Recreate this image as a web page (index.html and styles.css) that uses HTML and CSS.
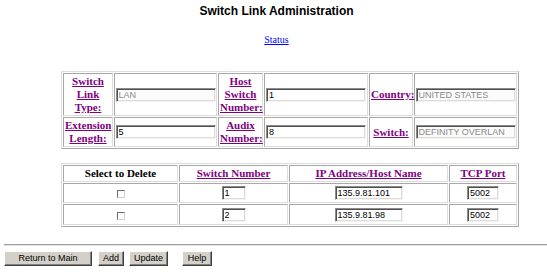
FILE: index.html
```html
<!DOCTYPE html>
<html lang="en">
<head>
    <meta charset="UTF-8">
    <title>Switch Link Administration</title>
    <link rel="stylesheet" href="styles.css">
</head>
<body>
<div class="page">
    <h1 class="title">Switch Link Administration</h1>
    <p class="status"><a href="#">Status</a></p>

    <table class="grid props">
        <tr>
            <td class="lbl c1"><a href="#">Switch Link Type:</a></td>
            <td class="fld c2"><input class="txt wide dim" type="text" value="LAN" readonly></td>
            <td class="lbl c3"><a href="#">Host Switch Number:</a></td>
            <td class="fld c4"><input class="txt wide" type="text" value="1"></td>
            <td class="lbl c5"><a href="#">Country:</a></td>
            <td class="fld c6"><input class="txt wide dim" type="text" value="UNITED STATES" readonly></td>
        </tr>
        <tr>
            <td class="lbl"><a href="#">Extension Length:</a></td>
            <td class="fld"><input class="txt wide" type="text" value="5"></td>
            <td class="lbl"><a href="#">Audix Number:</a></td>
            <td class="fld"><input class="txt wide" type="text" value="8"></td>
            <td class="lbl"><a href="#">Switch:</a></td>
            <td class="fld"><input class="txt wide dim" type="text" value="DEFINITY OVERLAN" readonly></td>
        </tr>
    </table>

    <table class="grid links">
        <tr class="head">
            <th class="k1">Select to Delete</th>
            <th class="k2"><a href="#">Switch Number</a></th>
            <th class="k3"><a href="#">IP Address/Host Name</a></th>
            <th class="k4"><a href="#">TCP Port</a></th>
        </tr>
        <tr>
            <td><input class="box" type="checkbox"></td>
            <td><input class="txt num" type="text" value="1"></td>
            <td><input class="txt ip" type="text" value="135.9.81.101"></td>
            <td><input class="txt port" type="text" value="5002"></td>
        </tr>
        <tr>
            <td><input class="box" type="checkbox"></td>
            <td><input class="txt num" type="text" value="2"></td>
            <td><input class="txt ip" type="text" value="135.9.81.98"></td>
            <td><input class="txt port" type="text" value="5002"></td>
        </tr>
    </table>

    <hr class="rule">

    <div class="actions">
        <button class="btn main">Return to Main</button>
        <button class="btn add">Add</button>
        <button class="btn update">Update</button>
        <button class="btn help">Help</button>
    </div>
</div>
</body>
</html>
```

FILE: styles.css
```css
body {
    margin: 0;
    font-family: "Liberation Serif", "Times New Roman", serif;
    background-color: #fff;
    color: #000;
    overflow: hidden;
}
.page {
    width: 545px;
    padding: 4px 0 0 4px;
}
.title {
    margin: 0;
    font: bold 12px/14px "Liberation Sans", Arial, sans-serif;
    text-align: center;
}
.status {
    margin: 16px 0 0;
    font-size: 10px;
    line-height: 12px;
    text-align: center;
}
.status a {
    color: #0000ff;
}

/* bordered tables, old browser look */
.grid {
    border-collapse: separate;
    border-spacing: 1px;
    border: 1px solid;
    border-color: #dcdcdc #a8a8a8 #a8a8a8 #dcdcdc;
    table-layout: fixed;
    width: 458px;
    margin-left: 57px;
}
.grid td,
.grid th {
    box-sizing: border-box;
    border: 1px solid;
    border-color: #a8a8a8 #dcdcdc #dcdcdc #a8a8a8;
    padding: 1px;
    text-align: center;
    vertical-align: middle;
    font-size: 11px;
    line-height: 13px;
    font-weight: bold;
}
.grid a {
    color: #800080;
}
.props {
    margin-top: 25px;
}
.props .fld {
    padding: 0;
}
.c1 { width: 50px; }
.c2 { width: 103px; }
.c3 { width: 45px; }
.c4 { width: 104px; }
.c5 { width: 44px; }
.c6 { width: 103px; }

.links {
    margin-top: 14px;
}
.links td {
    padding: 2px;
}
.k1 { width: 115px; }
.k2 { width: 109px; }
.k3 { width: 159px; }
.k4 { width: 68px; }

/* inset text boxes */
.txt {
    box-sizing: border-box;
    height: 14px;
    margin: 0;
    padding: 0 2px;
    border: 1px solid;
    border-color: #8c8c8c #f4f4f4 #f4f4f4 #8c8c8c;
    box-shadow: inset 1px 1px 0 #505050, inset -1px -1px 0 #dedad4;
    background-color: #fff;
    font: 9px/10px "Liberation Sans", Arial, sans-serif;
    color: #000;
    vertical-align: middle;
}
.dim {
    color: #8a8a8a;
    background-color: #fbfbfb;
}
.wide { width: 100px; }
.num { width: 24px; }
.ip { width: 68px; }
.port { width: 32px; }

.box {
    appearance: none;
    box-sizing: border-box;
    width: 8px;
    height: 8px;
    margin: 0;
    border: 1px solid;
    border-color: #6e6e6e #d0d0d0 #d0d0d0 #6e6e6e;
    background-color: #fff;
    vertical-align: middle;
}

.rule {
    margin: 17px 0 0;
    height: 0;
    border: none;
    border-top: 1px solid #a0a0a0;
    border-bottom: 1px solid #e2e2e2;
}

.actions {
    display: flex;
    margin-top: 5px;
}
.btn {
    box-sizing: border-box;
    height: 15px;
    margin: 0;
    padding: 0 5px;
    border: 1px solid;
    border-color: #fff #404040 #404040 #fff;
    box-shadow: inset -1px -1px 0 #808080;
    background-color: #d4d0c8;
    font: 9px/12px "Liberation Sans", Arial, sans-serif;
    color: #000;
}
.main { width: 88px; }
.add { margin-left: 6px; width: 26px; padding: 0; }
.update { margin-left: 5px; width: 39px; padding: 0; }
.help { margin-left: 14px; width: 30px; padding: 0; }
```
